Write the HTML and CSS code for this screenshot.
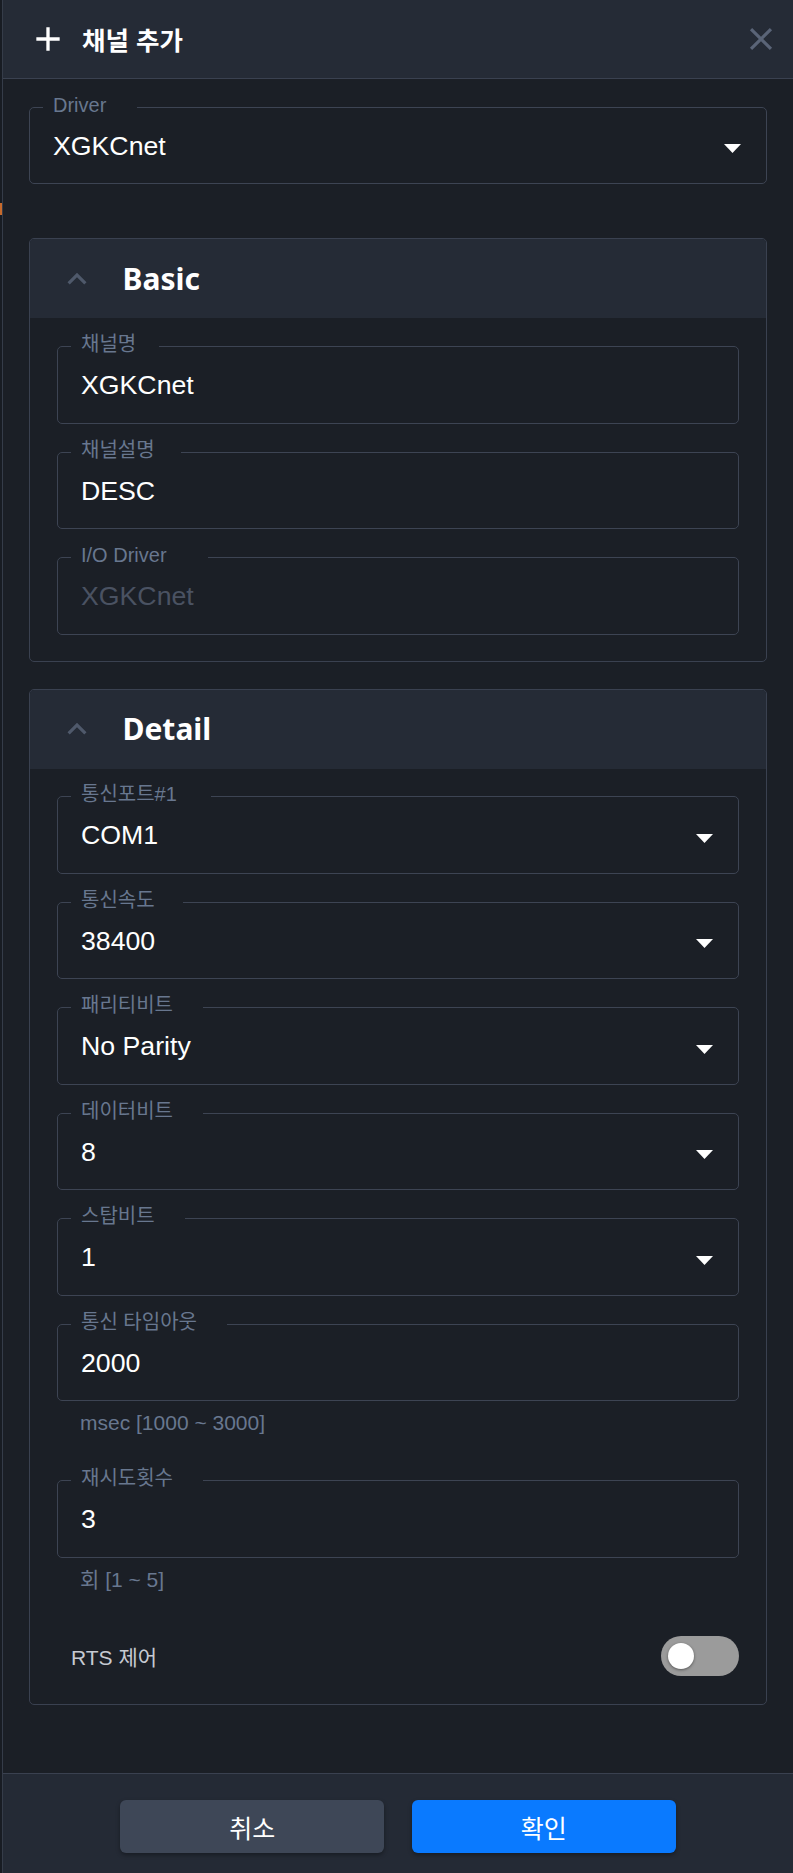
FILE: index.html
```html
<!DOCTYPE html>
<html lang="ko">
<head>
<meta charset="utf-8">
<title>채널 추가</title>
<link rel="stylesheet" href="styles.css">
</head>
<body>
<div class="page">
  <div class="strip"><span class="strip-mark"></span></div>
  <div class="drawer">
    <header class="head">
      <svg class="icon-plus" viewBox="0 0 24 24"><path d="M19 13h-6v6h-2v-6H5v-2h6V5h2v6h6v2z"/></svg>
      <h1 class="head-title">채널 추가</h1>
      <svg class="icon-close" viewBox="0 0 24 24"><path d="M19 6.41 17.59 5 12 10.59 6.41 5 5 6.41 10.59 12 5 17.59 6.41 19 12 13.41 17.59 19 19 17.59 13.41 12z"/></svg>
    </header>

    <main class="body">
      <fieldset class="field">
        <legend class="lg lg-31">Driver</legend>
        <div class="value"><span>XGKCnet</span><svg class="caret" viewBox="0 0 17 9"><path d="M0 0h17L8.5 9z"/></svg></div>
      </fieldset>

      <section class="card card-basic">
        <div class="card-head">
          <svg class="chev" viewBox="0 0 24 24"><path d="M12 8l-6 6 1.41 1.41L12 10.83l4.59 4.58L18 14z"/></svg>
          <span class="card-title">Basic</span>
        </div>
        <div class="card-body">
          <fieldset class="field">
            <legend class="lg lg-23">채널명</legend>
            <div class="value"><span>XGKCnet</span></div>
          </fieldset>
          <fieldset class="field">
            <legend class="lg lg-26">채널설명</legend>
            <div class="value"><span>DESC</span></div>
          </fieldset>
          <fieldset class="field">
            <legend class="lg lg-41">I/O Driver</legend>
            <div class="value disabled"><span>XGKCnet</span></div>
          </fieldset>
        </div>
      </section>

      <section class="card card-detail">
        <div class="card-head">
          <svg class="chev" viewBox="0 0 24 24"><path d="M12 8l-6 6 1.41 1.41L12 10.83l4.59 4.58L18 14z"/></svg>
          <span class="card-title">Detail</span>
        </div>
        <div class="card-body">
          <fieldset class="field">
            <legend class="lg lg-34">통신포트#1</legend>
            <div class="value"><span>COM1</span><svg class="caret" viewBox="0 0 17 9"><path d="M0 0h17L8.5 9z"/></svg></div>
          </fieldset>
          <fieldset class="field">
            <legend class="lg lg-28">통신속도</legend>
            <div class="value"><span>38400</span><svg class="caret" viewBox="0 0 17 9"><path d="M0 0h17L8.5 9z"/></svg></div>
          </fieldset>
          <fieldset class="field">
            <legend class="lg lg-30">패리티비트</legend>
            <div class="value"><span>No Parity</span><svg class="caret" viewBox="0 0 17 9"><path d="M0 0h17L8.5 9z"/></svg></div>
          </fieldset>
          <fieldset class="field">
            <legend class="lg lg-30">데이터비트</legend>
            <div class="value"><span>8</span><svg class="caret" viewBox="0 0 17 9"><path d="M0 0h17L8.5 9z"/></svg></div>
          </fieldset>
          <fieldset class="field">
            <legend class="lg lg-30">스탑비트</legend>
            <div class="value"><span>1</span><svg class="caret" viewBox="0 0 17 9"><path d="M0 0h17L8.5 9z"/></svg></div>
          </fieldset>
          <div class="field-wrap">
            <fieldset class="field">
              <legend class="lg lg-30">통신 타임아웃</legend>
              <div class="value"><span>2000</span></div>
            </fieldset>
            <p class="helper">msec [1000 ~ 3000]</p>
          </div>
          <div class="field-wrap">
            <fieldset class="field">
              <legend class="lg lg-30">재시도횟수</legend>
              <div class="value"><span>3</span></div>
            </fieldset>
            <p class="helper">회 [1 ~ 5]</p>
          </div>
          <div class="rts">
            <span class="rts-label">RTS 제어</span>
            <span class="toggle"><span class="knob"></span></span>
          </div>
        </div>
      </section>
    </main>

    <footer class="foot">
      <button class="btn btn-cancel" type="button">취소</button>
      <button class="btn btn-ok" type="button">확인</button>
    </footer>
  </div>
</div>
</body>
</html>
```

FILE: styles.css
```css
html, body {
  margin: 0;
  padding: 0;
}

body {
  background: #1b1f26;
  font-family: "Liberation Sans", "Noto Sans CJK KR", sans-serif;
  color: #ffffff;
}

.page {
  display: flex;
  height: 1873px;
  overflow: hidden;
}

.strip {
  width: 2px;
  background: #181c23;
  display: flex;
  flex-direction: column;
}

.strip-mark {
  display: block;
  margin-top: 203px;
  height: 12px;
  background: #c76a2c;
}

.drawer {
  flex: 1;
  min-width: 0;
  display: flex;
  flex-direction: column;
  border-left: 1px solid #353c49;
  background: #1b1f26;
}

/* header */
.head {
  height: 78px;
  flex: none;
  background: #252b36;
  border-bottom: 1px solid #3a4150;
  display: flex;
  align-items: center;
  padding: 0 13px 0 25px;
}

.icon-plus {
  width: 40px;
  height: 40px;
  fill: #ffffff;
  flex: none;
}

.head-title {
  flex: 1;
  margin: 0 0 0 14px;
  font-family: "Noto Sans CJK KR", "Noto Sans", sans-serif;
  font-weight: 700;
  font-size: 25.5px;
  line-height: 32px;
  color: #ffffff;
}

.icon-close {
  width: 38px;
  height: 38px;
  fill: #5a6477;
  flex: none;
}

/* body */
.body {
  flex: 1;
  min-height: 0;
  padding: 15.7px 26px 0 26px;
  display: flex;
  flex-direction: column;
}

/* outlined field */
.field {
  margin: 0;
  padding: 10px 25px 21.5px 23px;
  border: 1px solid #3d4453;
  border-radius: 5px;
  min-width: 0;
}

.lg {
  margin-left: -10px;
  padding: 0 30px 5px 10px;
  font-size: 20px;
  line-height: 20px;
  color: #68778f;
}

.lg-23 { padding-right: 23px; }
.lg-26 { padding-right: 26px; }
.lg-28 { padding-right: 28px; }
.lg-30 { padding-right: 30px; }
.lg-31 { padding-right: 31px; }
.lg-34 { padding-right: 34px; }
.lg-41 { padding-right: 41px; }

.value {
  display: flex;
  align-items: center;
  justify-content: space-between;
  height: 32px;
  font-size: 26.7px;
  line-height: 32px;
  color: #ffffff;
}

.value.disabled {
  color: #4a5262;
}

.caret {
  width: 17px;
  height: 9px;
  margin-top: 6.5px;
  fill: #ffffff;
  flex: none;
}

/* cards */
.card {
  border: 1px solid #3a4150;
  border-radius: 5px;
  overflow: hidden;
}

.card-basic {
  margin-top: 54px;
}

.card-detail {
  margin-top: 27px;
}

.card-head {
  height: 79px;
  background: #252b36;
  display: flex;
  align-items: center;
  padding-left: 27.5px;
}

.chev {
  width: 38px;
  height: 38px;
  fill: #4f596b;
  flex: none;
}

.card-title {
  margin-left: 27px;
  font-family: "Noto Sans", "Noto Sans CJK KR", sans-serif;
  font-weight: 700;
  font-size: 30px;
  line-height: 40px;
  color: #ffffff;
}

.card-body {
  padding: 16px 27px 26px;
  display: flex;
  flex-direction: column;
  gap: 16px;
}

.card-detail .card-body {
  padding-top: 15.5px;
  padding-bottom: 28px;
}

.field-wrap {
  display: flex;
  flex-direction: column;
}

.helper {
  margin: 5px 23px 13.3px;
  font-size: 21px;
  line-height: 33px;
  color: #68778f;
}

.rts {
  display: flex;
  align-items: center;
  justify-content: space-between;
  height: 40px;
  margin-top: 11px;
  padding-left: 14px;
}

.rts-label {
  font-size: 21px;
  color: #c6cad2;
}

.toggle {
  width: 78px;
  height: 40px;
  box-sizing: border-box;
  border-radius: 20px;
  background: #9b9b9b;
  display: flex;
  align-items: center;
  padding-left: 6.5px;
}

.knob {
  width: 26px;
  height: 26px;
  border-radius: 50%;
  background: #ffffff;
  box-shadow: 0 1px 3px rgba(0, 0, 0, 0.45);
}

/* footer */
.foot {
  flex: none;
  height: 100px;
  box-sizing: border-box;
  background: #242a35;
  border-top: 1px solid #3a4150;
  display: flex;
  justify-content: center;
  gap: 27.5px;
  padding-top: 26px;
}

.btn {
  width: 264px;
  height: 53px;
  border: 0;
  border-radius: 6px;
  font-family: "Noto Sans CJK KR", sans-serif;
  font-size: 25px;
  color: #ffffff;
  display: flex;
  align-items: center;
  justify-content: center;
  box-shadow: 0 2px 4px rgba(0, 0, 0, 0.35);
  padding: 0;
}

.btn-cancel {
  background: #3e4757;
}

.btn-ok {
  background: #0a7aff;
}
```
